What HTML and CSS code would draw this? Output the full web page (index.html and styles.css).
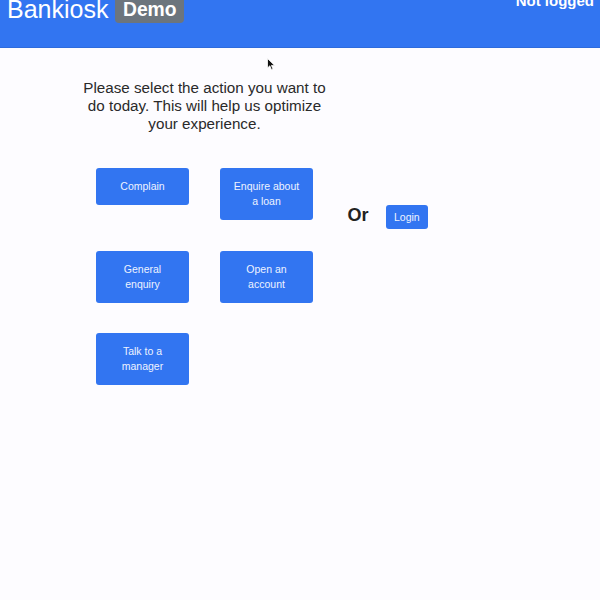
FILE: index.html
```html
<!DOCTYPE html>
<html>
<head>
<meta charset="utf-8">
<title>Bankiosk</title>
<link rel="stylesheet" href="styles.css">
</head>
<body>
<header class="topbar">
  <div class="brand">
    <span class="brand-name">Bankiosk</span>
    <span class="badge">Demo</span>
  </div>
  <div class="status">Not logged</div>
</header>
<main class="main">
  <section class="actions">
    <p class="intro">Please select the action you want to do today. This will help us optimize your experience.</p>
    <div class="grid">
      <button class="btn action">Complain</button>
      <button class="btn action">Enquire about a loan</button>
      <button class="btn action">General enquiry</button>
      <button class="btn action">Open an account</button>
      <button class="btn action">Talk to a manager</button>
    </div>
  </section>
  <section class="alt">
    <span class="or">Or</span>
    <button class="btn login">Login</button>
  </section>
</main>
<svg class="cursor" width="9" height="13" viewBox="0 0 9 13"><path d="M0.5 0.5 L0.5 10 L2.8 7.8 L4.5 11.8 L6 11.1 L4.4 7.4 L7.6 7.4 Z" fill="#111" stroke="#fff" stroke-width="0.8"/></svg>
</body>
</html>
```
FILE: styles.css
```css
* { box-sizing: border-box; }
html, body { margin: 0; padding: 0; }
body {
  background: #fdfcff;
  font-family: "Liberation Sans", Arial, sans-serif;
  color: #222;
  width: 600px;
  height: 600px;
  overflow: hidden;
  position: relative;
}
.topbar {
  height: 48px;
  background: #3275f1;
  border-bottom: 1px solid #2e6bdc;
  display: flex;
  justify-content: space-between;
  align-items: flex-start;
  color: #fff;
  overflow: hidden;
}
.brand {
  display: flex;
  align-items: flex-start;
  padding-left: 7px;
}
.brand-name {
  font-size: 25px;
  line-height: 25px;
  margin-top: -3px;
}
.badge {
  margin-left: 7px;
  margin-top: -4px;
  height: 27px;
  line-height: 27px;
  padding: 0 7.5px;
  background: #6c757d;
  color: #fff;
  font-weight: bold;
  font-size: 19.3px;
  border-radius: 4px;
}
.status {
  font-weight: bold;
  font-size: 15px;
  line-height: 15px;
  margin-top: -7px;
  padding-right: 6px;
}
.main {
  display: flex;
  align-items: flex-start;
  padding-left: 79.5px;
  padding-top: 31px;
}
.actions {
  width: 250px;
  display: flex;
  flex-direction: column;
  align-items: center;
}
.intro {
  margin: 0;
  font-size: 15.2px;
  line-height: 18px;
  text-align: center;
  color: #2a2a2a;
}
.grid {
  margin-top: 35px;
  display: grid;
  grid-template-columns: 93px 93px;
  column-gap: 31px;
  row-gap: 30.5px;
  align-items: start;
}
.btn {
  font-family: "Liberation Sans", Arial, sans-serif;
  background: #3275f1;
  color: #eef3ff;
  border: none;
  border-radius: 3px;
  cursor: pointer;
}
.action {
  width: 93px;
  padding: 11px 12px;
  font-size: 10.5px;
  line-height: 15px;
  text-align: center;
}
.alt {
  margin-left: 18px;
  margin-top: 126px;
  display: flex;
  align-items: center;
  height: 24px;
}
.or {
  font-size: 18px;
  font-weight: bold;
  line-height: 20px;
  padding-bottom: 4px;
  color: #222;
}
.login {
  margin-left: 17px;
  height: 24px;
  padding: 0 8.5px;
  font-size: 10.5px;
  line-height: 24px;
}
.cursor {
  position: absolute;
  left: 267px;
  top: 58px;
}
```
